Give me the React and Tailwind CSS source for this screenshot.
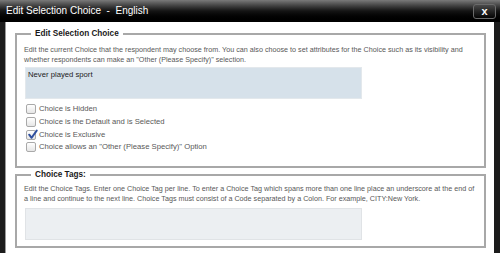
import React from "react";

function Box({ checked }) {
  return (
    <span className="relative inline-block w-[10px] h-[10px] rounded-[2px] border border-[#a9a9a9] bg-gradient-to-b from-white to-[#e6e6e6] shrink-0">
      {checked && (
        <svg viewBox="0 0 10 10" className="absolute left-[0px] top-[-2px] w-[11px] h-[11px]">
          <path d="M2 5.2 L4.2 8 L8.8 1.5" fill="none" stroke="#2f4f9e" strokeWidth="1.8" strokeLinecap="round" strokeLinejoin="round" />
        </svg>
      )}
    </span>
  );
}

function Row({ label, checked }) {
  return (
    <div className="flex items-center gap-[3px] h-[12.7px]">
      <Box checked={checked} />
      <span>{label}</span>
    </div>
  );
}

export default function App() {
  return (
    <div className="w-[500px] h-[253px] overflow-hidden bg-[#1c1c1c] flex flex-col font-['Liberation_Sans',Arial,sans-serif]">
      <div className="h-[22px] shrink-0 flex items-center justify-between pl-[6px] pr-[4px] bg-gradient-to-b from-[#7a7a7a] via-[#141414] to-[#000]">
        <span className="text-white text-[10px] leading-none">Edit Selection Choice&nbsp; - &nbsp;English</span>
        <div className="w-[23px] h-[15px] rounded-[3px] border border-[#6a6a6a] bg-gradient-to-b from-[#4a4a4a] to-[#050505] flex items-center justify-center text-white text-[11px] font-bold leading-none">
          x
        </div>
      </div>
      <div className="flex-1 ml-[5px] mr-[6px] bg-white border-l border-[#9a9a9a] pl-[9px] pr-[8px] pt-[6px] text-[#585858] text-[7.2px] leading-[10px]">
        <fieldset className="border-2 border-[#a8a8a8] pl-[7px] pr-[8px] pb-[12px] pt-0 m-0">
          <legend className="ml-[7px] px-[4px] text-[#1a1a1a] font-bold text-[8.2px] leading-[12px]">Edit Selection Choice</legend>
          <p className="mt-[5px]">
            Edit the current Choice that the respondent may choose from. You can also choose to set attributes for the Choice such as its visibility and whether respondents can make an "Other (Please Specify)" selection.
          </p>
          <div className="mt-[2px] ml-[1px] w-[337px] h-[32px] bg-[#d6e1ea] border border-[#e3e8ec] px-[2px] pt-[2px] text-[#222] text-[7.7px]">
            Never played sport
          </div>
          <div className="mt-[4px] ml-[2px] flex flex-col text-[7.7px]">
            <Row label="Choice is Hidden" />
            <Row label="Choice is the Default and is Selected" />
            <Row label="Choice is Exclusive" checked />
            <Row label={'Choice allows an "Other (Please Specify)" Option'} />
          </div>
        </fieldset>
        <fieldset className="mt-[1px] border-2 border-[#a8a8a8] pl-[7px] pr-[8px] pb-[6px] pt-0 m-0">
          <legend className="ml-[7px] px-[4px] text-[#1a1a1a] font-bold text-[8.2px] leading-[12px]">Choice Tags:</legend>
          <p className="mt-[3px]">
            Edit the Choice Tags. Enter one Choice Tag per line. To enter a Choice Tag which spans more than one line place an underscore at the end of a line and continue to the next line. Choice Tags must consist of a Code separated by a Colon. For example, CITY:New York.
          </p>
          <div className="mt-[4px] ml-[1px] w-[337px] h-[32px] bg-[#eceff2] border border-[#e0e3e6]"></div>
        </fieldset>
      </div>
    </div>
  );
}
